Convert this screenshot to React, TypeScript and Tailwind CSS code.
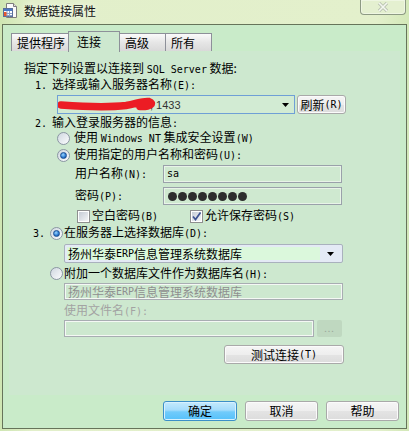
import type { ReactNode } from "react";

const A = ({ children }: { children: ReactNode }) => (
  <span className="font-['DejaVu_Sans_Mono',monospace] text-[10px]">{children}</span>
);

function Radio({ checked }: { checked?: boolean }) {
  return (
    <span className="w-[13px] h-[13px] shrink-0 rounded-full border border-[#8b96a3] bg-[linear-gradient(135deg,#cfd7e0,#fbfcfd)] flex items-center justify-center">
      {checked && (
        <span className="w-[7px] h-[7px] rounded-full border border-[#1b4f94] bg-[radial-gradient(circle_at_40%_35%,#9ad6ff,#2a78d0_60%,#0d3f86)]" />
      )}
    </span>
  );
}

function Check({ checked }: { checked?: boolean }) {
  return (
    <span className="w-[13px] h-[13px] shrink-0 border border-[#8e8f8f] bg-white p-[1px] flex">
      <span className="flex-1 bg-[linear-gradient(135deg,#c6ccd6,#f4f5f7)] flex items-center justify-center">
        {checked && (
          <svg width="9" height="9" viewBox="0 0 9 9">
            <path d="M1 4.5 L3.5 7.5 L8.5 0.5" stroke="#3d5291" strokeWidth="1.7" fill="none" />
          </svg>
        )}
      </span>
    </span>
  );
}

function Arrow() {
  return (
    <svg width="7" height="4" viewBox="0 0 7 4">
      <path d="M0 0h7L3.5 4z" fill="#000" />
    </svg>
  );
}

function Btn({ children, className }: { children: ReactNode; className: string }) {
  return (
    <div
      className={`flex items-center justify-center rounded-[3px] border border-[#a9a9a9] bg-[linear-gradient(to_bottom,#f5f5f5_0%,#eeeeee_50%,#e4e4e4_50%,#dcdcdc_100%)] shadow-[inset_0_0_0_1px_#fbfbfb] ${className}`}
    >
      {children}
    </div>
  );
}

function Dots() {
  return (
    <div className="flex gap-[1px] ml-[4px]">
      {[0, 1, 2, 3, 4, 5, 6, 7].map((i) => (
        <span key={i} className="w-[9px] h-[9px] rounded-full bg-[#2e2e2e]" />
      ))}
    </div>
  );
}

function DocIcon() {
  return (
    <svg width="15" height="15" viewBox="0 0 15 15">
      <path d="M3.5 0.5h7l3 3v11h-10z" fill="#fbfbfb" stroke="#7d7d7d" />
      <path d="M10.5 0.5v3h3" fill="#e0e0e0" stroke="#7d7d7d" />
      <rect x="0.5" y="5.5" width="9" height="8" fill="#fff" stroke="#5a6f9a" />
      <rect x="1" y="6" width="8" height="2" fill="#4a79c4" />
      <path d="M1 10.5h8M1 12.5h8M4 8v5.5M6.5 8v5.5" stroke="#8aa0c8" />
      <rect x="1" y="9" width="2.5" height="4" fill="#e4572e" />
    </svg>
  );
}

export default function App() {
  return (
    <div className="w-[409px] h-[431px] overflow-hidden bg-[linear-gradient(to_right,#cfe6b3,#e2efca_8%,#e3f0cc_92%,#d3e8b8)] font-['Noto_Sans_CJK_SC',sans-serif] text-[12px] leading-[16px] text-black">
      {/* title bar */}
      <div className="h-[24px] flex items-start">
        <div className="ml-[3px] mt-[3px]">
          <DocIcon />
        </div>
        <span className="ml-[6px] mt-[3px] text-[#111] [text-shadow:0_0_6px_#ffffff]">数据链接属性</span>
        <div className="ml-auto mr-[3px] w-[46px] h-[15px] border border-t-0 border-[#8d9a84] rounded-b-[4px] bg-[#e4f0d0] shadow-[inset_0_0_0_1px_#eef6e2] flex items-center justify-center">
          <svg width="12" height="10" viewBox="0 0 12 10">
            <path d="M2 1l8 8M10 1l-8 8" stroke="#b8c2b0" strokeWidth="3.2" />
            <path d="M2 1l8 8M10 1l-8 8" stroke="#f4f7f0" strokeWidth="1.6" />
          </svg>
        </div>
      </div>

      {/* client area */}
      <div className="ml-[2px] w-[405px] h-[405px] border border-[#66745a] bg-[#c9ebc9]">
        {/* tabs */}
        <div className="pt-[6px] pl-[8px] h-[26px] flex items-end">
          <div className="w-[58px] h-[18px] border border-b-0 border-[#8d9099] bg-[linear-gradient(to_bottom,#fbfbfb,#e6e6e6_50%,#d9d9d9)] pl-[5px] leading-[17px]">
            提供程序
          </div>
          <div className="-ml-px w-[52px] h-[21px] -mb-px relative z-10 border border-b-0 border-[#8d9099] bg-[#cde8cf] pl-[8px] leading-[19px]">
            连接
          </div>
          <div className="-ml-px w-[47px] h-[18px] border border-b-0 border-[#8d9099] bg-[linear-gradient(to_bottom,#fbfbfb,#e6e6e6_50%,#d9d9d9)] pl-[5px] leading-[17px]">
            高级
          </div>
          <div className="-ml-px w-[47px] h-[18px] border border-b-0 border-[#8d9099] bg-[linear-gradient(to_bottom,#fbfbfb,#e6e6e6_50%,#d9d9d9)] pl-[5px] leading-[17px]">
            所有
          </div>
        </div>

        {/* tab page */}
        <div className="ml-[6px] w-[391px] h-[344px] bg-[#cde8cf] flex flex-col">
          <div className="mt-[9px] pl-[15px] h-[16px]">
            指定下列设置以连接到 <A>SQL Server</A> 数据:
          </div>
          <div className="pl-[26px] h-[16px] flex">
            <span className="w-[17px]"><A>1.</A></span>
            <span>
              选择或输入服务器名称<A>(E):</A>
            </span>
          </div>
          <div className="mt-[3px] pl-[48px] flex">
            <div className="relative w-[238px] h-[19px] border border-[#6f9fd6] bg-[#d2ebd3] flex items-center">
              <span className="ml-[92px] font-['Liberation_Sans',sans-serif] text-[11px] text-[#333]">, 1433</span>
              <div className="ml-auto mr-[3px] w-[11px] flex items-center justify-center">
                <Arrow />
              </div>
              <svg className="absolute left-0 top-0" width="100" height="19" viewBox="0 0 100 19">
                <path
                  d="M3 9 C 24 10.5, 50 11.5, 68 9.5 C 78 8, 85 4.5, 91 5.5 C 96 7, 93 11, 82 10.5"
                  stroke="#ec1c24"
                  strokeWidth="7.5"
                  strokeLinecap="round"
                  fill="none"
                />
              </svg>
            </div>
            <Btn className="ml-[2px] w-[49px] h-[19px]">
              刷新<A>(R)</A>
            </Btn>
          </div>
          <div className="pl-[26px] h-[16px] flex">
            <span className="w-[17px]"><A>2.</A></span>
            <span>
              输入登录服务器的信息<A>:</A>
            </span>
          </div>
          <div className="pl-[48px] h-[16px] flex items-center gap-[4px]">
            <Radio />
            <span>
              使用 <A>Windows NT</A> 集成安全设置<A>(W)</A>
            </span>
          </div>
          <div className="mt-[1px] pl-[48px] h-[16px] flex items-center gap-[4px]">
            <Radio checked />
            <span>
              使用指定的用户名称和密码<A>(U):</A>
            </span>
          </div>
          <div className="mt-[2px] pl-[66px] h-[18px] flex items-center">
            <span className="w-[88px]">
              用户名称<A>(N):</A>
            </span>
            <div className="w-[179px] h-[18px] border border-[#9aa1aa] shadow-[inset_0_0_0_1px_#e8f4e8] bg-[#cfe9d0] flex items-center">
              <span className="ml-[3px] font-['DejaVu_Sans_Mono',monospace] text-[10px]">sa</span>
            </div>
          </div>
          <div className="mt-[4px] pl-[66px] h-[18px] flex items-center">
            <span className="w-[88px]">
              密码<A>(P):</A>
            </span>
            <div className="w-[179px] h-[18px] border border-[#9aa1aa] shadow-[inset_0_0_0_1px_#e8f4e8] bg-[#cfe9d0] flex items-center">
              <Dots />
            </div>
          </div>
          <div className="mt-[3px] pl-[68px] h-[16px] flex items-center">
            <Check />
            <span className="ml-[2px] w-[98px]">
              空白密码<A>(B)</A>
            </span>
            <Check checked />
            <span className="ml-[2px]">
              允许保存密码<A>(S)</A>
            </span>
          </div>
          <div className="mt-[1px] pl-[24px] h-[16px] flex items-center">
            <span className="w-[17px]"><A>3.</A></span>
            <Radio checked />
            <span className="ml-[1px]">
              在服务器上选择数据库<A>(D):</A>
            </span>
          </div>
          <div className="mt-[3px] pl-[55px]">
            <div className="w-[279px] h-[19px] border border-[#a9b1bd] rounded-[2px] bg-[#e4eaf5] flex items-center p-[2px]">
              <div className="w-[253px] h-[13px] bg-[#dbf8dc] flex items-center pl-[1px] leading-[13px]">
                扬州华泰<A>ERP</A>信息管理系统数据库
              </div>
              <div className="flex-1 flex items-center justify-center">
                <Arrow />
              </div>
            </div>
          </div>
          <div className="mt-[2px] pl-[41px] h-[17px] flex items-center gap-[1px]">
            <Radio />
            <span>
              附加一个数据库文件作为数据库名<A>(H):</A>
            </span>
          </div>
          <div className="mt-[1px] pl-[55px]">
            <div className="w-[279px] h-[17px] border border-[#a8adb2] shadow-[inset_0_0_0_1px_#f4f8f4] bg-[#cde8cf] flex items-center pl-[3px] text-[#8f8f8f] leading-[15px]">
              扬州华泰<A>ERP</A>信息管理系统数据库
            </div>
          </div>
          <div className="mt-[2px] pl-[55px] h-[16px] text-[#a3a3a3]">
            使用文件名<A>(F):</A>
          </div>
          <div className="mt-[2px] pl-[55px] flex">
            <div className="w-[250px] h-[17px] border border-[#a8adb2] shadow-[inset_0_0_0_1px_#f4f8f4] bg-[#cde8cf]" />
            <div className="ml-[3px] w-[25px] h-[17px] rounded-[2px] bg-[#bfd8c0] flex items-center justify-center text-[9px] text-[#9aa89a] tracking-[1px]">
              ...
            </div>
          </div>
          <div className="mt-[8px] pl-[215px]">
            <Btn className="w-[120px] h-[19px]">
              测试连接<A>(T)</A>
            </Btn>
          </div>
        </div>

        {/* bottom buttons */}
        <div className="mt-[6px] pr-[7px] flex justify-end gap-[8px]">
          <div className="w-[74px] h-[20px] rounded-[3px] border border-[#3c8fc8] bg-[linear-gradient(to_bottom,#c4eafd_0%,#a4dcfc_45%,#71cbfb_55%,#55c1fa_100%)] shadow-[inset_0_0_0_1px_#d8f1fe] flex items-center justify-center">
            确定
          </div>
          <Btn className="w-[73px] h-[20px]">取消</Btn>
          <Btn className="w-[73px] h-[20px]">帮助</Btn>
        </div>
      </div>
    </div>
  );
}
